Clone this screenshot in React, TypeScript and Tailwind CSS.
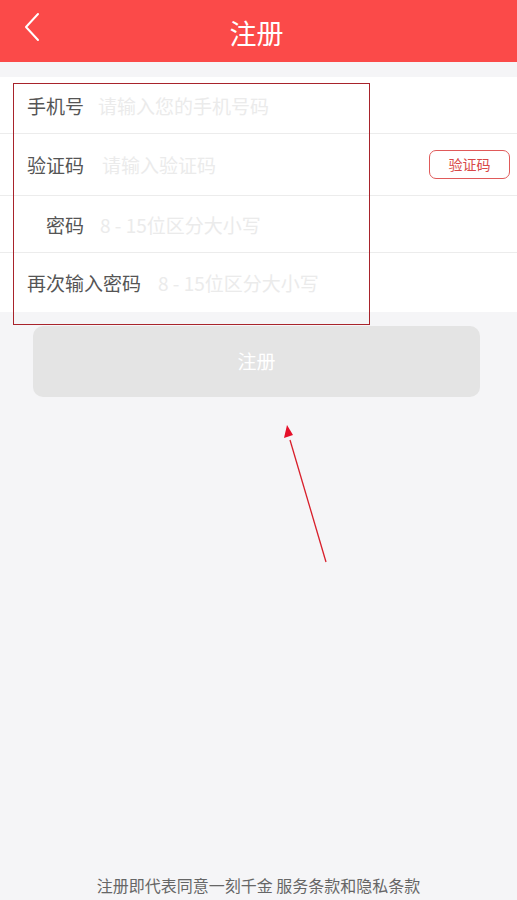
import React from 'react';

const font = { fontFamily: '"Noto Sans CJK SC", "Noto Sans", sans-serif' };

interface Field {
  label: string;
  placeholder: string;
  labelClass: string;
  code?: boolean;
}

const fields: Field[] = [
  { label: '手机号', placeholder: '请输入您的手机号码', labelClass: 'w-[71px]' },
  { label: '验证码', placeholder: '请输入验证码', labelClass: 'w-[75px]', code: true },
  { label: '密码', placeholder: '8 - 15位区分大小写', labelClass: 'w-[73px] text-right pr-[16px]' },
  { label: '再次输入密码', placeholder: '8 - 15位区分大小写', labelClass: 'w-[131px]' },
];

export default function App() {
  return (
    <div className="relative w-[517px] h-[900px] bg-[#f5f5f7] flex flex-col overflow-hidden" style={font}>
      {/* Header */}
      <div className="h-[62px] bg-[#fb4a49] flex items-center relative shrink-0">
        <svg className="absolute left-[22px] top-[12px]" width="20" height="30" viewBox="0 0 20 30" fill="none">
          <path d="M16 2 L4 15 L16 28" stroke="#fff" strokeWidth="2" strokeLinecap="round" strokeLinejoin="round" />
        </svg>
        <div className="w-full text-center text-white text-[27px] leading-none pt-[2px] pr-[4px]">注册</div>
      </div>

      {/* Form rows */}
      <div className="mt-[15px] bg-white">
        {fields.map((f, i) => (
          <div
            key={f.label + i}
            className={`flex items-center pl-[27px] pr-[7px] ${i < 3 ? 'border-b border-[#ececec]' : ''} ${
              i === 0 ? 'h-[57px]' : i === 2 ? 'h-[57px]' : i === 1 ? 'h-[62px]' : 'h-[59px]'
            }`}
          >
            <span className={`${f.labelClass} shrink-0 text-[19px] text-[#555] leading-none`}>{f.label}</span>
            <span className="flex-1 text-[19px] text-[#ebebeb] leading-none">{f.placeholder}</span>
            {f.code && (
              <div className="w-[81px] h-[29px] border border-[#e05a5a] rounded-[7px] flex items-center justify-center text-[14px] text-[#d84848]">
                验证码
              </div>
            )}
          </div>
        ))}
      </div>

      {/* Submit */}
      <div className="px-[33px] pr-[37px] mt-[14px]">
        <div className="h-[71px] rounded-[10px] bg-[#e4e4e4] flex items-center justify-center text-white text-[19px]">
          注册
        </div>
      </div>

      <div className="flex-1" />

      <div className="pb-[3px] text-center text-[16px] text-[#666]">注册即代表同意一刻千金 服务条款和隐私条款</div>

      {/* Annotation overlays */}
      <div className="absolute left-[13px] top-[83px] w-[357px] h-[242px] border border-[#a8232b] pointer-events-none" />
      <svg className="absolute left-0 top-0 pointer-events-none" width="517" height="900">
        <line x1="326" y1="562" x2="290" y2="440" stroke="#d81e2a" strokeWidth="1.3" />
        <polygon points="287,425 284,438 293,435" fill="#e5102a" />
      </svg>
    </div>
  );
}
